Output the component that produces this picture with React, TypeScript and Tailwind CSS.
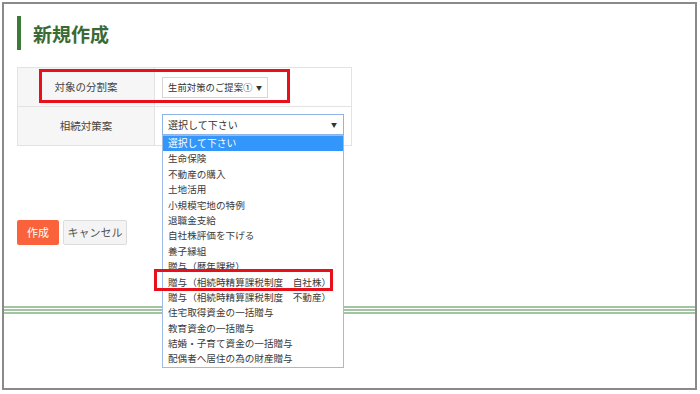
import React from 'react';

const options = [
  '選択して下さい',
  '生命保険',
  '不動産の購入',
  '土地活用',
  '小規模宅地の特例',
  '退職金支給',
  '自社株評価を下げる',
  '養子縁組',
  '贈与（暦年課税）',
  '贈与（相続時精算課税制度　自社株）',
  '贈与（相続時精算課税制度　不動産）',
  '住宅取得資金の一括贈与',
  '教育資金の一括贈与',
  '結婚・子育て資金の一括贈与',
  '配偶者へ居住の為の財産贈与',
];

export default function App() {
  return (
    <div
      className="w-[700px] h-[394px] bg-white p-[2px] text-[#333]"
      style={{ fontFamily: '"Noto Sans CJK JP", "Noto Sans", sans-serif' }}
    >
      <div className="relative h-[388px] w-[695px] border-2 border-[#8a8a8a] flex flex-col">
        {/* Heading */}
        <div className="ml-[13px] mt-[12px] h-[34px] border-l-4 border-[#3d7a3a] pl-[12px] flex items-center">
          <h1 className="text-[19px] font-bold text-[#3b6a33] leading-none">新規作成</h1>
        </div>

        {/* Form table */}
        <div className="ml-[13px] mt-[17px] w-[335px] border border-[#e3e3e3] text-[10.5px]">
          <div className="flex h-[39px] border-b border-[#e3e3e3]">
            <div className="w-[137px] bg-[#f6f6f6] border-r border-[#e3e3e3] flex items-center justify-center text-[#444]">
              対象の分割案
            </div>
            <div className="flex items-center pl-[7px]">
              <div className="h-[21px] w-[106px] border border-[#d6d6d6] bg-white flex items-center pl-[5px] pr-[5px] justify-between whitespace-nowrap">
                <span className="text-[9.4px]">生前対策のご提案①</span>
                <span className="text-[6px]">▼</span>
              </div>
            </div>
          </div>
          <div className="flex h-[38px]">
            <div className="w-[137px] bg-[#f6f6f6] border-r border-[#e3e3e3] flex items-center justify-center text-[#444]">
              相続対策案
            </div>
            <div className="relative flex items-start pl-[7px] pt-[7px]">
              <div className="h-[21px] w-[182px] border border-[#8fb3e6] bg-white flex items-center pl-[5px] pr-[6px] justify-between">
                <span className="text-[10px]">選択して下さい</span>
                <span className="text-[6px]">▼</span>
              </div>
              {/* Open dropdown list */}
              <div className="absolute left-[7px] top-[28px] z-10 w-[182px] border border-[#9dbbe6] bg-white">
                {options.map((o, i) => (
                  <div
                    key={o}
                    className={
                      i === 0
                        ? 'h-[15.4px] leading-[15.4px] pl-[5px] text-[9.8px] bg-[#3296fa] text-white'
                        : 'h-[15.4px] leading-[15.4px] pl-[5px] text-[9.6px] text-[#3a3a3a] whitespace-nowrap'
                    }
                  >
                    {o}
                  </div>
                ))}
              </div>
            </div>
          </div>
        </div>

        {/* Buttons */}
        <div className="ml-[13px] mt-[74px] flex gap-[4px]">
          <button className="h-[25px] w-[42px] rounded-[2px] bg-[#f9623b] text-white text-[11px]">作成</button>
          <button className="h-[25px] w-[64px] rounded-[2px] bg-[#f4f4f4] border border-[#dcdcdc] text-[#555] text-[11px]">
            キャンセル
          </button>
        </div>

        {/* Triple green rule */}
        <div className="mt-[61px] flex flex-col gap-[1px]">
          <div className="h-[2px] bg-[#a3c4a3]" />
          <div className="h-[2px] bg-[#a3c4a3]" />
          <div className="h-[2px] bg-[#a3c4a3]" />
        </div>

        {/* Red highlight boxes */}
        <div className="absolute left-[35px] top-[65px] w-[251px] h-[34px] border-[3px] border-[#e8101a] pointer-events-none" />
        <div className="absolute left-[150px] top-[265px] w-[179px] h-[22px] border-[3px] border-[#e8101a] pointer-events-none z-20" />
      </div>
    </div>
  );
}
